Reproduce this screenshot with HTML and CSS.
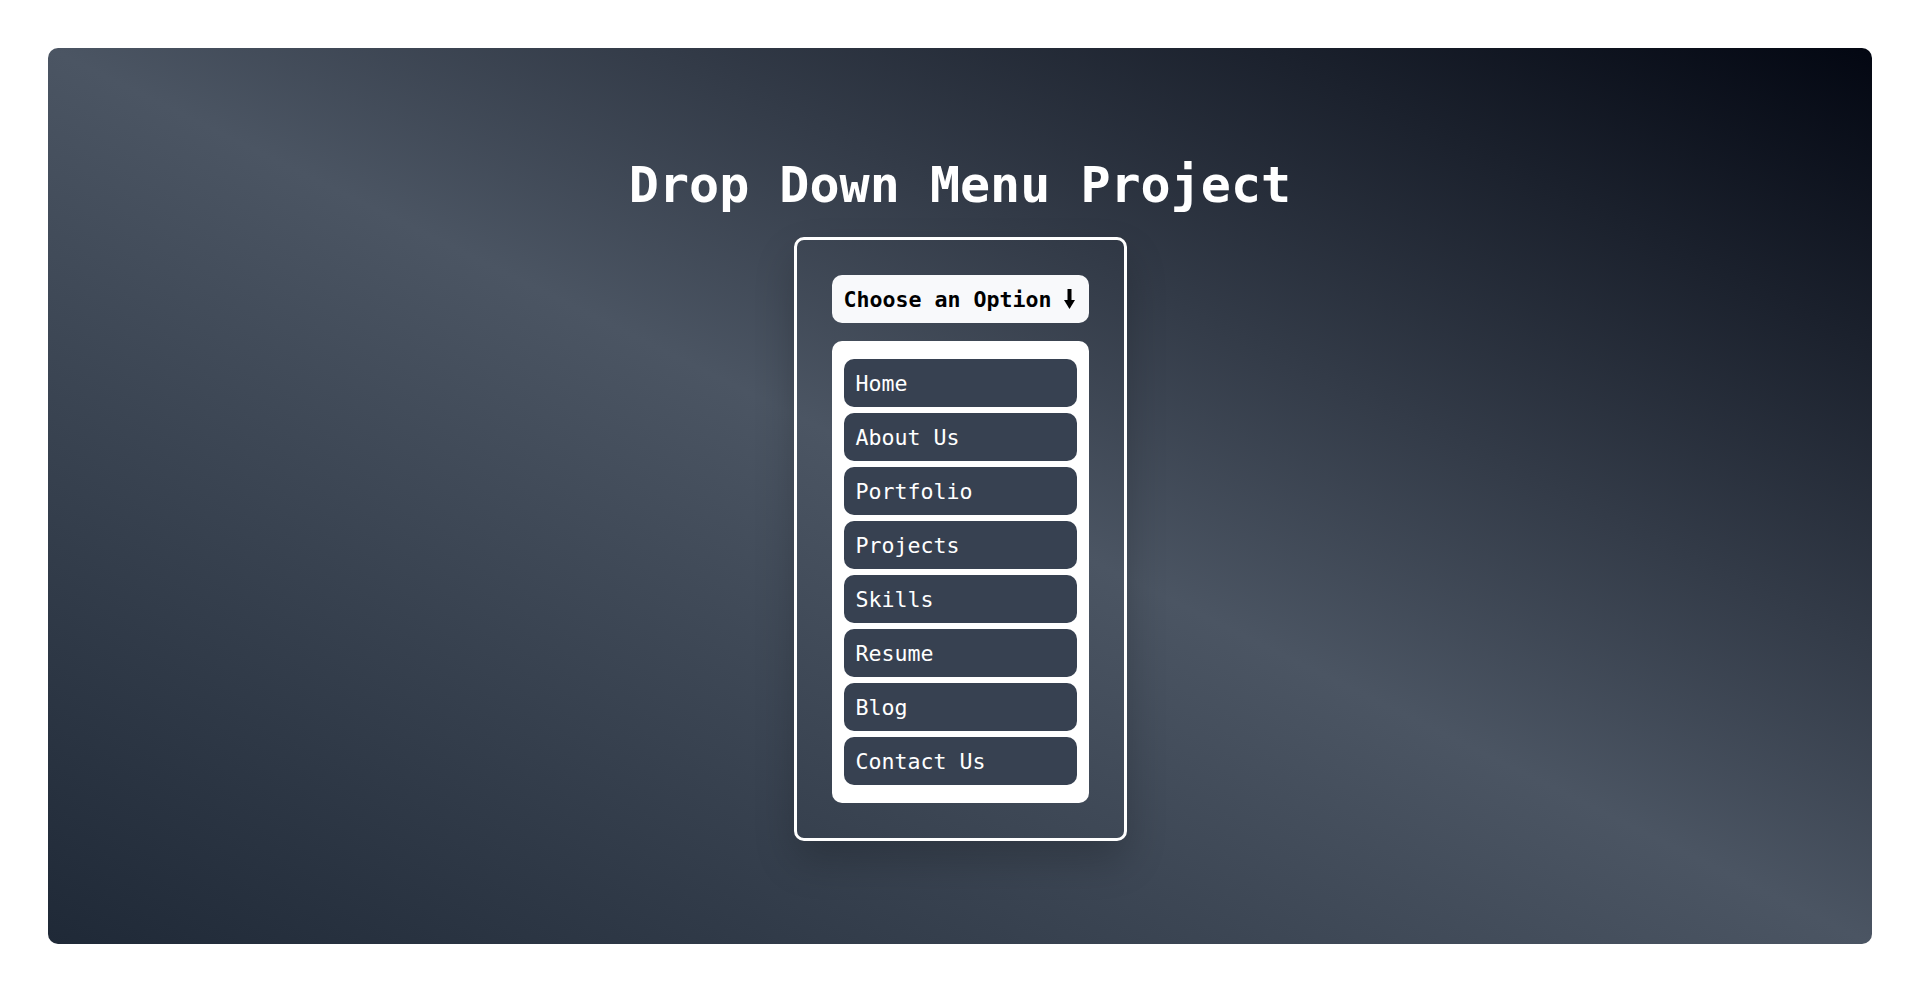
FILE: index.html
```html
<!DOCTYPE html>
<html lang="en">
<head>
<meta charset="utf-8">
<title>Drop Down Menu Project</title>
<link rel="stylesheet" href="styles.css">
</head>
<body>
  <main class="panel">
    <h1 class="title">Drop Down Menu Project</h1>
    <section class="dropdown">
      <button class="toggle" type="button">Choose an Option <svg class="arrow" width="11" height="20" viewBox="0 0 11 20" aria-hidden="true"><rect x="3.5" y="0" width="4" height="12" fill="#000"/><polygon points="0,11 11,11 5.5,20" fill="#000"/></svg></button>
      <ul class="menu">
        <li class="item">Home</li>
        <li class="item">About Us</li>
        <li class="item">Portfolio</li>
        <li class="item">Projects</li>
        <li class="item">Skills</li>
        <li class="item">Resume</li>
        <li class="item">Blog</li>
        <li class="item">Contact Us</li>
      </ul>
    </section>
  </main>
</body>
</html>
```

FILE: styles.css
```css
* {
  box-sizing: border-box;
}

html, body {
  margin: 0;
  padding: 0;
  background: #ffffff;
}

body {
  padding: 48px;
  height: 993px;
  font-family: "DejaVu Sans Mono", "Liberation Mono", monospace;
}

.panel {
  height: 896px;
  border-radius: 10px;
  background: linear-gradient(to top right, #1f2937 0%, #4b5563 50%, #030712 100%);
  display: flex;
  flex-direction: column;
  align-items: center;
  padding-top: 108px;
}

.title {
  margin: 0 0 23px 0;
  color: #ffffff;
  font-size: 50px;
  line-height: 58px;
  font-weight: 700;
  letter-spacing: 0;
}

.dropdown {
  width: 333px;
  border: 3px solid #ffffff;
  border-radius: 10px;
  padding: 35px;
  display: flex;
  flex-direction: column;
  gap: 18px;
  box-shadow: 0 20px 40px rgba(0, 0, 0, 0.2);
}

.toggle {
  height: 48px;
  border: none;
  border-radius: 10px;
  background: #f8f9fb;
  color: #000000;
  font-family: inherit;
  font-size: 21.6px;
  font-weight: 700;
  padding: 0 12px;
  text-align: left;
  white-space: nowrap;
  display: flex;
  align-items: center;
}

.arrow {
  margin-left: 12px;
  flex: none;
}

.menu {
  list-style: none;
  margin: 0;
  padding: 18px 12px;
  background: #ffffff;
  border-radius: 10px;
  display: flex;
  flex-direction: column;
  gap: 6px;
}

.item {
  height: 48px;
  border-radius: 10px;
  background: #374151;
  color: #ffffff;
  font-size: 21.6px;
  padding: 0 12px;
  display: flex;
  align-items: center;
}
```
